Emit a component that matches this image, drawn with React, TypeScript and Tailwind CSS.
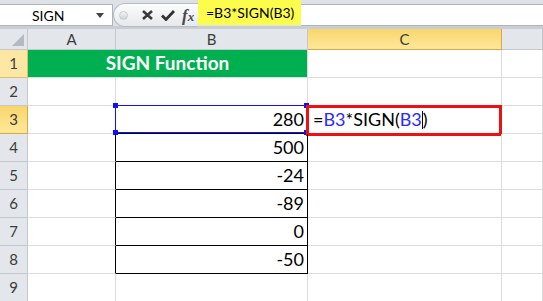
export default function App() {
  const gridLine = "border-r border-b border-[#dadcdd]";
  const head = "flex items-center justify-center border-r border-b border-[#c3c8ce] bg-[#e3e6ea] text-[15px] text-[#3c3c3c]";
  const headHot =
    "flex items-center justify-center border-r border-b border-[#e2a544] bg-linear-to-b from-[#f9d66a] to-[#fee89a] text-[15px] text-[#3c3c3c]";
  const rowHeadSoft =
    "flex items-center justify-center border-r border-b border-[#e7bb6c] bg-[#fde7a4] text-[15px] text-[#3c3c3c]";

  const values = ["280", "500", "-24", "-89", "0", "-50"];

  return (
    <div className="w-[543px] h-[301px] overflow-hidden bg-white font-['Lato',sans-serif]">
      {/* formula bar */}
      <div className="flex h-[29px] items-start border-b-[3px] border-[#c9ced5] bg-[#dee2e7]">
        <div className="mt-[4px] flex h-[22px] w-[113px] items-center border-y border-r border-[#aeb4bc] bg-white pl-[32px] pr-[8px] text-[14px] text-black">
          <span className="flex-1">SIGN</span>
          <svg width="8" height="5" viewBox="0 0 8 5">
            <path d="M0 0h8L4 5z" fill="#444" />
          </svg>
        </div>
        <div className="mt-[3px] flex h-[24px] w-[85px] items-center rounded-l-full border border-r-0 border-[#b7bcc3] bg-linear-to-b from-[#fbfcfd] to-[#e6e9ed]">
          <div className="ml-[5px] h-[9px] w-[9px] rounded-full border border-[#c6cacf] bg-linear-to-b from-[#f4f5f6] to-[#cfd3d8]" />
          <svg className="ml-[14px]" width="11" height="10" viewBox="0 0 11 10">
            <path d="M1 1l9 8M10 1l-9 8" stroke="#3a3a3a" strokeWidth="2.6" />
          </svg>
          <svg className="ml-[8px]" width="14" height="11" viewBox="0 0 14 11">
            <path d="M1 5.5l4 4L13 1" stroke="#333" strokeWidth="2.8" fill="none" />
          </svg>
          <span className="ml-[7px] font-['Liberation_Serif',serif] text-[17px] font-bold italic leading-none text-[#4a4a4a]">
            f<span className="text-[13px]">x</span>
          </span>
        </div>
        <div className="flex h-[25px] w-[103px] items-center bg-[#fcfc4c] pl-[8px] text-[14px] text-black">
          =B3*SIGN(B3)
        </div>
        <div className="mt-[4px] h-[22px] flex-1 border-y border-[#aeb4bc] bg-white" />
      </div>

      {/* sheet */}
      <div className="grid grid-cols-[28px_88px_192px_194px_41px] grid-rows-[21px_repeat(9,28px)]">
        <div className={`${head} relative`}>
          <svg className="absolute bottom-[3px] right-[3px]" width="12" height="12" viewBox="0 0 12 12">
            <path d="M12 0v12H0z" fill="#b4bac2" />
          </svg>
        </div>
        <div className={head}>A</div>
        <div className={head}>B</div>
        <div className={headHot}>C</div>
        <div className={head} />

        {/* row 1 */}
        <div className={rowHeadSoft}>1</div>
        <div className="col-span-2 flex items-center justify-center border-r border-b border-[#dadcdd] bg-[#00b050] text-[19px] font-bold text-white">
          SIGN Function
        </div>
        <div className={gridLine} />
        <div className={gridLine} />

        {/* row 2 */}
        <div className={head}>2</div>
        <div className={gridLine} />
        <div className="border-r border-b border-r-[#dadcdd] border-b-black" />
        <div className={gridLine} />
        <div className={gridLine} />

        {values.map((v, i) => {
          const row = i + 3;
          const active = row === 3;
          return (
            <div key={v} className="contents">
              <div className={active ? headHot : head}>{row}</div>
              <div className="border-r border-b border-r-black border-b-[#dadcdd]" />
              <div className="relative flex items-center justify-end border-r border-b border-black pr-[3px] text-[18px] text-black">
                {v}
                {active && (
                  <div className="absolute -left-px -top-px h-[28px] w-[192px] border border-[#1010ff]">
                    <div className="absolute -left-[3px] -top-[3px] h-[5px] w-[5px] bg-[#1010ff]" />
                    <div className="absolute -right-[3px] -top-[3px] h-[5px] w-[5px] bg-[#1010ff]" />
                    <div className="absolute -bottom-[3px] -left-[3px] h-[5px] w-[5px] bg-[#1010ff]" />
                    <div className="absolute -bottom-[3px] -right-[3px] h-[5px] w-[5px] bg-[#1010ff]" />
                  </div>
                )}
              </div>
              <div className={`${gridLine} relative flex items-center pl-[5px] text-[18px] text-black`}>
                {active && (
                  <>
                    <span>=</span>
                    <span className="text-[#2a2aff]">B3</span>
                    <span>*SIGN(</span>
                    <span className="text-[#2a2aff]">B3</span>
                    <span className="h-[18px] w-px bg-black" />
                    <span>)</span>
                    <div className="absolute -left-[2px] -top-[1px] h-[31px] w-[196px] border-[3px] border-[#ee1111]" />
                  </>
                )}
              </div>
              <div className={gridLine} />
            </div>
          );
        })}

        {/* row 9 */}
        <div className={head}>9</div>
        <div className={gridLine} />
        <div className={gridLine} />
        <div className={gridLine} />
        <div className={gridLine} />
      </div>
    </div>
  );
}
